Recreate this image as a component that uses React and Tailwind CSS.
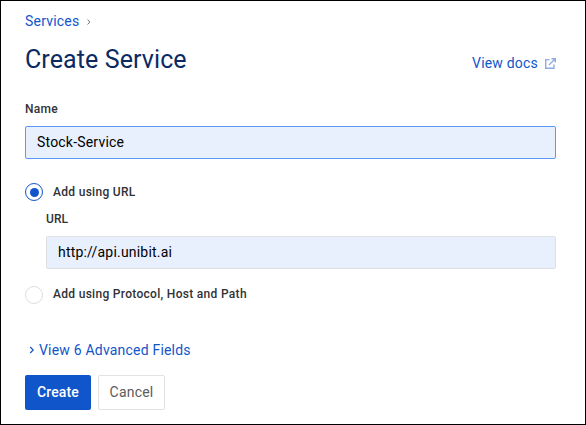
export default function App() {
  return (
    <main className="h-[425px] w-[586px] overflow-hidden border border-black bg-white px-6 pt-[10px] font-['Roboto',sans-serif] text-[#303236]">
      <nav className="flex h-5 items-center gap-2 text-[14px] tracking-[0.2px] text-[#1155cb]">
        <a>Services</a>
        <svg className="mt-0.5" width="4" height="6" viewBox="0 0 4 6" fill="none" stroke="#6f7680"><path d="M.6.5 2.8 3 .6 5.5" /></svg>
      </nav>
      <header className="mt-[10px] flex h-9 w-[531px] items-center justify-between">
        <h1 className="pt-0.5 text-[25px] leading-9 tracking-[0.1px] text-[#0b2a63]">Create Service</h1>
        <a className="mt-2 flex items-center gap-[7px] text-[14px] tracking-[0.2px] text-[#1155cb]">
          View docs
          <svg width="11" height="11" viewBox="0 0 11 11" fill="none" stroke="#8dabe4" strokeWidth="1.4"><path d="M4.5 1.6H.7v8.7h8.2V6.5M4 7l6-6M6.5.7h3.8v3.8" /></svg>
        </a>
      </header>
      <form>
        <label className="mt-6 block h-4 text-[12px] leading-4 font-medium tracking-[0.28px]">Name</label>
        <div className="mt-[9px] flex h-[33px] w-[531px] items-center rounded-[2px] border border-[#5b98f7] bg-[#e8f0fe] px-[11px] text-[14px] tracking-[0.2px] text-black">Stock-Service</div>
        <div className="mt-6 flex h-[18px] items-center gap-[10px] text-[12px] font-medium tracking-[0.3px]">
          <span className="flex size-[18px] items-center justify-center rounded-full border border-[#1155cb]"><span className="size-[9px] rounded-full bg-[#1155cb]" /></span>
          Add using URL
        </div>
        <div className="ml-[21px]">
          <label className="mt-[10px] block h-4 text-[12px] leading-4 font-medium tracking-[0.1px]">URL</label>
          <div className="mt-[9px] flex h-[33px] w-[510px] items-center rounded-[2px] border border-[#dcdfe4] bg-[#e8f0fe] px-[11px] text-[14px] tracking-[0.2px] text-black">http://api.unibit.ai</div>
        </div>
        <div className="mt-[17px] flex h-[18px] items-center gap-[10px] text-[12px] font-medium tracking-[0.3px]">
          <span className="size-[18px] rounded-full border border-[#dedede]" />
          <span className="-mt-0.5">Add using Protocol, Host and Path</span>
        </div>
        <div className="mt-9 flex h-5 items-center gap-1 pl-1 text-[14px] tracking-[0.2px] text-[#1155cb]">
          <svg width="6" height="8" viewBox="0 0 6 8" fill="none" stroke="currentColor" strokeWidth="1.2"><path d="m1.2 1 3 3-3 3" /></svg>
          View 6 Advanced Fields
        </div>
        <div className="mt-[15px] flex gap-[7px] text-[14px]">
          <button className="h-[35px] w-[66px] rounded-[2px] bg-[#1155cb] font-medium tracking-[0.1px] text-white">Create</button>
          <button className="h-[35px] w-[67px] rounded-[2px] border border-[#e2e2e2] tracking-[0.2px] text-[#5c5c5c]">Cancel</button>
        </div>
      </form>
    </main>
  );
}
